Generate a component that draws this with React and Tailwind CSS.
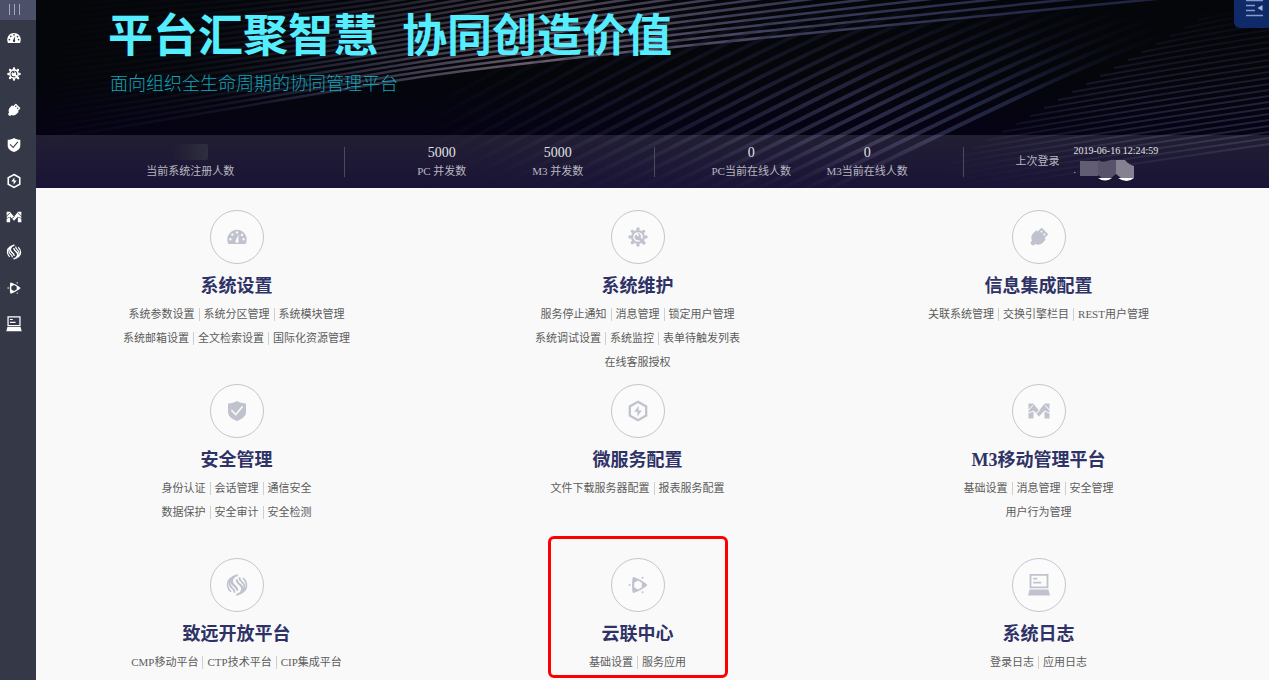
import { useState } from 'react';
import clsx from 'clsx';

const dot = (x, y, r) => `M${x - r} ${y}a${r} ${r} 0 1 0 ${2 * r} 0a${r} ${r} 0 1 0 ${-2 * r} 0z`;

const swirlHalf = (
  <>
    <path d="M4.6 2.6C-.6 6-.8 12.400 4 16.800" strokeWidth="1.600" />
    <path d="M6.800 1.200C1.600 5 1.400 10.200 5.400 13.400c1.800 1.500 2.400 2.800 2 4.400" strokeWidth="1.800" />
    <path d="M10.600 0C4.400 1.800 3 7.400 7 10.400c2.600 2 3.600 3 3 5.200" strokeWidth="2.200" />
  </>
);

// --- ICONS ---
const iconShapes = {
  gauge: (
    <path
      fillRule="evenodd"
      d={`M1.4 17A9.7 9.7 0 1 1 18.6 17z ${dot(10, 5.4, 1.2)} ${dot(5.4, 7.6, 1.2)} ${dot(3.4, 12.2, 1.2)} ${dot(16.6, 12.2, 1.2)} ${dot(15, 8, 1.2)} M11.6 7.6L11.3 13A1.7 1.7 0 1 1 8.8 13z`}
    />
  ),
  gear: (
    <>
      <path
        d={[0, 1, 2, 3, 4, 5, 6, 7]
          .map((i) => dot(10 + 8 * Math.cos((i * Math.PI) / 4), 10 + 8 * Math.sin((i * Math.PI) / 4), 1.7))
          .join(' ')}
      />
      <circle cx="10" cy="10" r="5.9" fill="none" stroke="currentColor" strokeWidth="2.2" />
      <path d="M7.6 7.2l2.4 2.2 1-1.2-1.6-2.1a3.6 3.6 0 0 1 3.5 4.6l5 5.2-1.8 2-5.1-5a3.5 3.5 0 0 1-4.4-1.9 3.6 3.6 0 0 1 1-3.6z" />
    </>
  ),
  plug: (
    <path
      transform="rotate(45 10 10)"
      fillRule="evenodd"
      d={`M5.2 2.5q0-1 1-1h7.6q1 0 1 1V7h1.9v4.5c0 3-1.7 5-4.2 6l-.5 2.5q-2 1.4-4 0l-.5-2.5c-2.5-1-4.200-3-4.200-6V7h1.900z ${dot(8, 4.4, 1)} ${dot(12, 4.4, 1)}`}
    />
  ),
  shield: (
    <path
      fillRule="evenodd"
      d="M10 0c2.5 1.6 5.6 2.4 9 2.6V11c0 4.2-3.8 7-9 9-5.2-2-9-4.8-9-9V2.6C4.4 2.4 7.5 1.6 10 0zM5 8.600L3.900 9.700l4.900 5 7.300-8.600-1.200-1-6.200 7.300z"
    />
  ),
  hexagon: (
    <>
      <path d="M10 .8l8.2 4.6v9.200L10 19.200l-8.200-4.600V5.400z" fill="none" stroke="currentColor" strokeWidth="2.3" />
      <path d="M10.6 4.8L6.2 10.8h3.200v4.600l4.400-6h-3.200z" />
    </>
  ),
  m3: (
    <path
      fillRule="evenodd"
      d="M-.5 2.5h4.700L10 9.500l5.800-7h4.700v15h-5V9.500L10 15.500 4.500 9.500v8h-5zM-.5 8.500l4.200-4.600.6.6-4.800 5.200zM-.5 11.500l5-2v.9l-5 2zM7 11.800l3.800-3.500.6.6-3.800 3.500zM20.500 8.500l-4.200-4.600-.6.6 4.800 5.200zM20.500 11.500l-5-2v.9l5 2z"
    />
  ),
  swirl: (
    <g fill="none" stroke="currentColor">
      {swirlHalf}
      <g transform="rotate(180 10 10)">{swirlHalf}</g>
    </g>
  ),
  cloud: (
    <>
      <path
        fillRule="evenodd"
        d="M5 2c1.7-.4 14 6.2 14.4 8-.4 1.8-12.7 8.4-14.4 8C3.8 17.2 3.8 2.8 5 2zM10 5.6L6.2 7.8v4.4l3.8 2.2 3.8-2.2V7.8z"
      />
      <path d={`${dot(1.6, 10, 1)} ${dot(14.6, 2.7, 1)} ${dot(14.6, 17.3, 1)}`} />
    </>
  ),
  laptop: (
    <path
      fillRule="evenodd"
      d="M.6-1h18.800v14.200H.6zM2.400.8v10.600h15.200V.8zM4.200 2.800h4v1.600h-4zM4.200 6.800h8v1.600h-8zM.6 14.400h18.800l1.600 6H-1z"
    />
  ),
};

function Icon({ name, className }) {
  return (
    <svg viewBox="0 0 20 20" fill="currentColor" aria-hidden="true" className={clsx('overflow-visible', className)}>
      {iconShapes[name]}
    </svg>
  );
}

// Each inner array of links is one line under the title
const modules = [
  {
    icon: 'gauge',
    title: '系统设置',
    links: [['系统参数设置', '系统分区管理', '系统模块管理'], ['系统邮箱设置', '全文检索设置', '国际化资源管理']],
  },
  {
    icon: 'gear',
    title: '系统维护',
    links: [['服务停止通知', '消息管理', '锁定用户管理'], ['系统调试设置', '系统监控', '表单待触发列表'], ['在线客服授权']],
  },
  { icon: 'plug', title: '信息集成配置', links: [['关联系统管理', '交换引擎栏目', 'REST用户管理']] },
  {
    icon: 'shield',
    title: '安全管理',
    links: [['身份认证', '会话管理', '通信安全'], ['数据保护', '安全审计', '安全检测']],
  },
  { icon: 'hexagon', title: '微服务配置', links: [['文件下载服务器配置', '报表服务配置']] },
  { icon: 'm3', title: 'M3移动管理平台', links: [['基础设置', '消息管理', '安全管理'], ['用户行为管理']] },
  { icon: 'swirl', title: '致远开放平台', links: [['CMP移动平台', 'CTP技术平台', 'CIP集成平台']] },
  { icon: 'cloud', title: '云联中心', links: [['基础设置', '服务应用']], highlighted: true },
  { icon: 'laptop', title: '系统日志', links: [['登录日志', '应用日志']] },
];

function Sidebar({ open, onToggle }) {
  return (
    <nav className="w-9 shrink-0 bg-[#353846] text-white">
      <button
        type="button"
        aria-label="菜单"
        aria-expanded={open}
        onClick={onToggle}
        className="flex h-5 w-full items-center justify-center gap-1 bg-[#4d5069] pr-2 pb-0.5"
      >
        <span className="h-[11px] w-px bg-[#a5a7b6]" />
        <span className="h-[11px] w-px bg-[#a5a7b6]" />
        <span className="h-[11px] w-px bg-[#a5a7b6]" />
      </button>
      <ul className="grid h-[321px] auto-rows-fr">
        {modules.map((item) => (
          <li key={item.icon}>
            <a href="#" aria-label={item.title} className="flex h-full items-center justify-center pt-px pr-2">
              <Icon name={item.icon} className="size-3.5" />
            </a>
          </li>
        ))}
      </ul>
    </nav>
  );
}

// Light trails behind the banner
function BannerLines() {
  const trails = Array.from({ length: 24 }, (_, i) => i);

  return (
    <svg
      viewBox="0 0 1233 188"
      preserveAspectRatio="none"
      fill="none"
      aria-hidden="true"
      className="absolute inset-0 h-full w-full"
    >
      <defs>
        <linearGradient id="upper" gradientUnits="userSpaceOnUse" x1="0" y1="0" x2="1233" y2="0">
          <stop offset="0" stopColor="#1d2038" stopOpacity="0" />
          <stop offset="0.14" stopColor="#20223a" stopOpacity="0.4" />
          <stop offset="0.24" stopColor="#33334d" stopOpacity="0.8" />
          <stop offset="0.4" stopColor="#6b5d6c" />
          <stop offset="0.6" stopColor="#414160" />
          <stop offset="0.8" stopColor="#262a4a" />
          <stop offset="1" stopColor="#181c38" />
        </linearGradient>
        <linearGradient id="middle" gradientUnits="userSpaceOnUse" x1="380" y1="0" x2="1180" y2="0">
          <stop offset="0" stopColor="#1b1c35" stopOpacity="0" />
          <stop offset="0.3" stopColor="#1c1e36" stopOpacity="0.7" />
          <stop offset="0.55" stopColor="#2b2a46" />
          <stop offset="0.75" stopColor="#20243f" />
          <stop offset="1" stopColor="#12152a" stopOpacity="0" />
        </linearGradient>
        <linearGradient id="right" gradientUnits="userSpaceOnUse" x1="880" y1="0" x2="1233" y2="0">
          <stop offset="0" stopColor="#1e1f36" stopOpacity="0" />
          <stop offset="0.6" stopColor="#1e1f36" />
          <stop offset="1" stopColor="#22223a" />
        </linearGradient>
        <linearGradient id="fade" x1="0" y1="0" x2="0" y2="1">
          <stop offset="0" stopColor="#000" />
          <stop offset="0.15" stopColor="#444" />
          <stop offset="0.55" stopColor="#fff" />
          <stop offset="0.75" stopColor="#fff" />
          <stop offset="1" stopColor="#222" />
        </linearGradient>
        <mask id="fadeMask" maskUnits="userSpaceOnUse" x="0" y="0" width="1233" height="188">
          <rect width="1233" height="188" fill="url(#fade)" />
        </mask>
      </defs>
      <g stroke="url(#upper)" strokeWidth="2.5">
        {trails.map((i) => (
          <path
            key={i}
            opacity={1 - i * 0.03}
            d={`M-40 ${146 - i * 6}C100 ${126 - i * 6} 240 ${100 - i * 5} 364 ${80 - i * 5}S800 ${30 - i * 7} 1233 ${-12 - i * 9}`}
          />
        ))}
      </g>
      <g mask="url(#fadeMask)">
        <g stroke="url(#middle)" strokeWidth="4">
          {trails.map((i) => (
            <path key={i} d={`M${770 - i * 24} 200C${920 - i * 24} 128 ${1050 - i * 25} 58 ${1200 - i * 27} 8`} />
          ))}
        </g>
        <g stroke="url(#right)" strokeWidth="2">
          {trails.map((i) => (
            <path key={i} d={`M${840 + i * 14} ${204 - i * 8}Q${1040 + i * 7} ${172 - i * 7} 1233 ${144 - i * 6}`} />
          ))}
        </g>
      </g>
    </svg>
  );
}

function Stat({ value, label }) {
  return (
    <div className="w-[116px] text-center">
      <div className="h-[18px] text-sm leading-[18px] text-[#e2e1e6]">{value}</div>
      <div className="text-[11px] leading-[18px] whitespace-nowrap">{label}</div>
    </div>
  );
}

function StatsBar() {
  return (
    <div className="relative grid min-h-[53px] grid-cols-[repeat(3,310fr)_305fr] items-center bg-linear-to-b from-[#a0a0b4]/18 to-[#4a3c80]/30 text-[#b9b7c1]">
      <div className="flex h-[30px] items-center justify-center border-r border-[#4b495a]">
        <Stat value={<span className="mx-auto block h-4 w-9 rounded-xs bg-linear-to-r from-transparent to-[#2f2e3e]" />} label="当前系统注册人数" />
      </div>
      <div className="flex h-[30px] items-center justify-center border-r border-[#4b495a]">
        <Stat value="5000" label="PC 并发数" />
        <Stat value="5000" label="M3 并发数" />
      </div>
      <div className="flex h-[30px] items-center justify-center border-r border-[#4b495a]">
        <Stat value="0" label="PC当前在线人数" />
        <Stat value="0" label="M3当前在线人数" />
      </div>
      <div className="flex items-center gap-3.5 pl-[51px]">
        <span className="text-[11px] whitespace-nowrap">上次登录</span>
        <div>
          <div className="text-[10px] leading-4 whitespace-nowrap text-[#e2e1e6]">2019-06-16 12:24:59</div>
          <div className="flex h-[22px] items-center gap-1 text-[10px]">
            <span>.</span>
            <svg viewBox="0 0 56 22" aria-hidden="true" className="h-[22px] w-14">
              <path d="M18 19h14q-7 5-14 0zM38 19h16q-7 6-16 0z" fill="#fff" />
              <path d="M0 2h18v15H0z" fill="#625d72" />
              <path d="M18 1q4 3 9 1t9-1v14l-5 4H22l-4-3z" fill="#58536a" />
              <path d="M36 1h9q3 4 9 6v12H41l-5-4z" fill="#858191" />
            </svg>
          </div>
        </div>
      </div>
    </div>
  );
}

function ModuleCard({ icon, title, links, highlighted }) {
  return (
    <section className="relative flex flex-col items-center">
      {highlighted && (
        <div className="pointer-events-none absolute -top-[22px] left-1/2 h-[142px] w-[180px] -translate-x-1/2 rounded-md border-3 border-[#fd0000]" />
      )}
      <div className="flex size-[54px] items-center justify-center rounded-full border border-[#c5c5d0] bg-[#fbfbfc] text-[#c0c3ce]">
        <Icon name={icon} className="size-5" />
      </div>
      <h2 className="mt-2 text-lg leading-7 font-bold text-[#2e3266]">{title}</h2>
      <div className="mt-0.5">
        {links.map((line) => (
          <ul key={line[0]} className="flex h-6 items-center justify-center divide-x divide-[#cfcfcf]">
            {line.map((link) => (
              <li key={link} className="px-1 text-[11px] leading-[13px] whitespace-nowrap text-[#5c5c5c]">
                <a href="#">{link}</a>
              </li>
            ))}
          </ul>
        ))}
      </div>
    </section>
  );
}

export default function App() {
  const [menuOpen, setMenuOpen] = useState(false);

  return (
    <div className="flex min-h-screen bg-[#f9f9f9] font-['Liberation_Serif','Noto_Sans_CJK_SC',serif]">
      <Sidebar open={menuOpen} onToggle={() => setMenuOpen(!menuOpen)} />
      <main className="min-w-0 flex-1">
        <header className="relative overflow-hidden bg-linear-to-b from-[#04060a] from-40% to-[#060216] to-75%">
          <BannerLines />
          <div className="relative min-h-[135px] pt-3 pl-[72px]">
            <h1 className="flex gap-6 text-[45px] leading-[50px] font-bold whitespace-nowrap text-[#55eeff]">
              <span>平台汇聚智慧</span>
              <span>协同创造价值</span>
            </h1>
            <p className="mt-2 pl-0.5 font-['Noto_Sans_CJK_SC',sans-serif] text-lg leading-6 font-light text-[#0ea5b8]">
              面向组织全生命周期的协同管理平台
            </p>
            <button
              type="button"
              aria-label="展开"
              className="absolute top-0 right-0 flex h-7 w-[35px] justify-center rounded-bl-md bg-[#0e2a68]"
            >
              <svg viewBox="0 0 35 28" aria-hidden="true" className="h-7 w-[35px]">
                <path d="M12 .5h17M12 5.5h9M12 10.5h9M12 15.5h17" stroke="#8b9ac8" strokeWidth="1.5" />
                <path d="M28.5 5v6l-5-3z" fill="#a9b5da" />
              </svg>
            </button>
          </div>
          <StatsBar />
        </header>
        <div className="grid grid-cols-3 grid-rows-[164px_164px_auto] gap-y-2.5 pt-[22px] pr-[30px]">
          {modules.map((item) => (
            <ModuleCard key={item.title} {...item} />
          ))}
        </div>
      </main>
    </div>
  );
}
